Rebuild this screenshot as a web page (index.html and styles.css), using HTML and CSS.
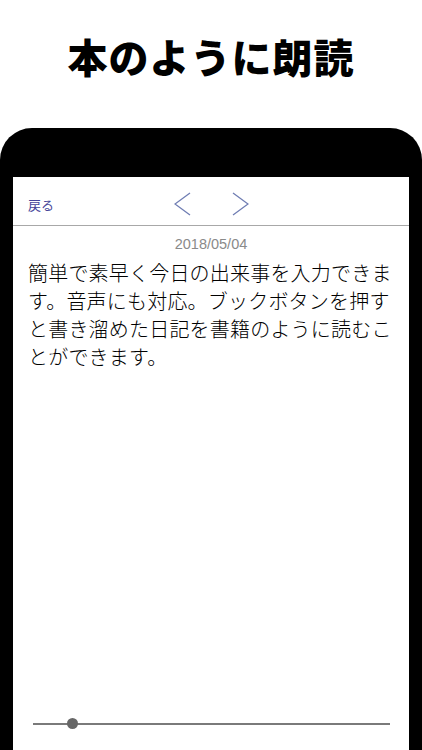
FILE: index.html
```html
<!DOCTYPE html>
<html lang="ja">
<head>
<meta charset="utf-8">
<link rel="stylesheet" href="styles.css">
</head>
<body>
<h1 class="title">本のように朗読</h1>
<div class="phone">
  <div class="screen">
    <div class="nav">
      <span class="back">戻る</span>
      <div class="arrows">
        <svg class="chev" width="17" height="24" viewBox="0 0 17 24"><polyline points="16,1 1,12 16,23" fill="none" stroke="#6f7db3" stroke-width="1.3"/></svg>
        <svg class="chev" width="17" height="24" viewBox="0 0 17 24"><polyline points="1,1 16,12 1,23" fill="none" stroke="#6f7db3" stroke-width="1.3"/></svg>
      </div>
    </div>
    <div class="date">2018/05/04</div>
    <p class="body">簡単で素早く今日の出来事を入力できます。音声にも対応。ブックボタンを押すと書き溜めた日記を書籍のように読むことができます。</p>
    <div class="slider">
      <div class="track"></div>
      <div class="thumb"></div>
    </div>
  </div>
</div>
</body>
</html>
```
FILE: styles.css
```css
html, body {
  margin: 0;
  padding: 0;
}
body {
  width: 422px;
  height: 750px;
  overflow: hidden;
  background: #fff;
  font-family: "Noto Sans CJK JP", "Noto Sans", sans-serif;
  display: flex;
  flex-direction: column;
}
.title {
  margin: 0;
  padding-top: 31px;
  height: 94px;
  box-sizing: border-box;
  font-size: 40px;
  line-height: 50px;
  font-weight: 900;
  text-align: center;
  color: #000;
  letter-spacing: 1px;
}
.phone {
  flex: 1;
  background: #000;
  border-radius: 32px 32px 0 0;
  padding: 49px 13px 0 13px;
  display: flex;
  flex-direction: column;
  margin-top: 34px;
}
.screen {
  flex: 1;
  background: #fff;
  display: flex;
  flex-direction: column;
  position: relative;
}
.nav {
  height: 49px;
  border-bottom: 1px solid #a8a8a8;
  display: flex;
  align-items: center;
  position: relative;
  box-sizing: border-box;
}
.back {
  margin-left: 15px;
  font-size: 13px;
  color: #46469a;
  margin-top: 6px;
}
.arrows {
  position: absolute;
  left: 161px;
  top: 15px;
  display: flex;
  gap: 41px;
}
.chev {
  display: block;
}
.date {
  text-align: center;
  font-family: "Liberation Sans", Arial, sans-serif;
  font-size: 14.5px;
  color: #8a8a8a;
  margin-top: 9px;
  line-height: 18px;
}
.body {
  margin: 6px 0 0 0;
  padding: 0 14px 0 15px;
  font-size: 20px;
  line-height: 28px;
  font-weight: 300;
  color: #000;
  letter-spacing: 0.2px;
}
.slider {
  position: absolute;
  left: 20px;
  right: 19px;
  bottom: 20px;
  height: 12px;
}
.track {
  position: absolute;
  left: 0;
  right: 0;
  top: 5px;
  height: 2px;
  background: #7a7a7a;
}
.thumb {
  position: absolute;
  left: 34px;
  top: 0;
  width: 11px;
  height: 11px;
  border-radius: 50%;
  background: #666;
}
```
